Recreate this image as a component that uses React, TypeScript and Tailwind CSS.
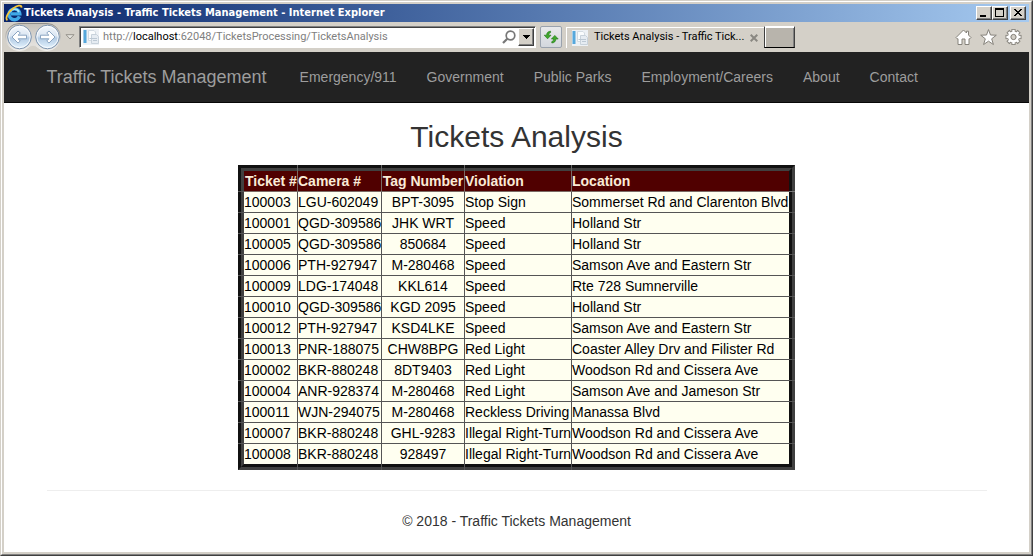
import { ReactNode } from 'react';
import clsx from 'clsx';

const links = ['Emergency/911', 'Government', 'Public Parks', 'Employment/Careers', 'About', 'Contact'];

const headers = ['Ticket #', 'Camera #', 'Tag Number', 'Violation', 'Location'];

const tickets = [
  ['100003', 'LGU-602049', 'BPT-3095', 'Stop Sign', 'Sommerset Rd and Clarenton Blvd'],
  ['100001', 'QGD-309586', 'JHK WRT', 'Speed', 'Holland Str'],
  ['100005', 'QGD-309586', '850684', 'Speed', 'Holland Str'],
  ['100006', 'PTH-927947', 'M-280468', 'Speed', 'Samson Ave and Eastern Str'],
  ['100009', 'LDG-174048', 'KKL614', 'Speed', 'Rte 728 Sumnerville'],
  ['100010', 'QGD-309586', 'KGD 2095', 'Speed', 'Holland Str'],
  ['100012', 'PTH-927947', 'KSD4LKE', 'Speed', 'Samson Ave and Eastern Str'],
  ['100013', 'PNR-188075', 'CHW8BPG', 'Red Light', 'Coaster Alley Drv and Filister Rd'],
  ['100002', 'BKR-880248', '8DT9403', 'Red Light', 'Woodson Rd and Cissera Ave'],
  ['100004', 'ANR-928374', 'M-280468', 'Red Light', 'Samson Ave and Jameson Str'],
  ['100011', 'WJN-294075', 'M-280468', 'Reckless Driving', 'Manassa Blvd'],
  ['100007', 'BKR-880248', 'GHL-9283', 'Illegal Right-Turn', 'Woodson Rd and Cissera Ave'],
  ['100008', 'BKR-880248', '928497', 'Illegal Right-Turn', 'Woodson Rd and Cissera Ave'],
];

function IeLogo() {
  return (
    <svg width="18" height="18" viewBox="0 0 18 18" className="shrink-0" aria-hidden="true">
      <path d="M14.4 12.4 A5.4 5.4 0 1 1 14.8 9.9 H6" fill="none" stroke="#3fa9e8" strokeWidth="3.4" />
      <path d="M5 8 A5 5 0 0 1 14 8" fill="none" stroke="#a6e6fb" strokeWidth="1.8" />
      <path d="M2.4 16.4 C0 14.6 2.6 8.4 8 4.4 C12 1.4 16.4 0.2 16.6 3.6" fill="none" stroke="#f9c836" strokeWidth="1.8" />
    </svg>
  );
}

function PageIcon() {
  return (
    <svg width="16" height="16" viewBox="0 0 16 16" className="shrink-0" aria-hidden="true">
      <rect x="0" y="0" width="16" height="16" fill="#edf1f5" />
      <rect x="0.5" y="1" width="3" height="13" fill="#56a8dc" />
      <path d="M5.5 1.5 H11 L12.5 3 V11.5 H5.5 Z" fill="#fafcfd" stroke="#d3dbe2" />
      <path d="M8.5 5.5 H13.5 L15.5 7.5 V14.5 H8.5 Z" fill="#e6ecf2" stroke="#c8d2db" />
      <path d="M6.5 9.5 H14 M10 11.5 H14" stroke="#bcc8d3" />
    </svg>
  );
}

function TravelButtons() {
  const arrow = 'M-7.5 0 L-1.5 -6 L0.8 -4 L-1.4 -1.8 H7 V1.8 H-1.4 L0.8 4 L-1.5 6 Z';
  return (
    <div className="relative h-[28px] w-[56px] shrink-0">
      <svg width="56" height="28" viewBox="0 0 56 28" aria-hidden="true">
        <defs>
          <linearGradient id="orb" x1="0" y1="0" x2="0" y2="1">
            <stop offset="0" stopColor="#f4f8fc" />
            <stop offset="0.45" stopColor="#dbe6f2" />
            <stop offset="0.55" stopColor="#b3cbe4" />
            <stop offset="1" stopColor="#e6f5ff" />
          </linearGradient>
          <linearGradient id="pod" x1="0" y1="0" x2="0" y2="1">
            <stop offset="0" stopColor="#c4c1bb" />
            <stop offset="1" stopColor="#eceae6" />
          </linearGradient>
          <linearGradient id="rim" x1="0" y1="0" x2="0" y2="1">
            <stop offset="0" stopColor="#8f8d89" />
            <stop offset="1" stopColor="#f2f1ee" />
          </linearGradient>
        </defs>
        <path
          d="M14 0.5 H42 A13.5 13.5 0 0 1 42 27.5 Q36 27.5 33 24.5 Q28 20 23 24.5 Q20 27.5 14 27.5 A13.5 13.5 0 0 1 14 0.5 Z"
          fill="url(#pod)"
          stroke="url(#rim)"
        />
        {[14.5, 42.5].map((x) => (
          <g key={x} transform={`translate(${x} 14)`}>
            <circle r="11.8" fill="url(#orb)" stroke="#7d93ad" />
            <circle r="10.6" fill="none" stroke="#fff" strokeOpacity="0.8" />
            <path d={arrow} transform={x > 28 ? 'scale(-1 1)' : undefined} fill="#fff" stroke="#8ba5c2" />
          </g>
        ))}
      </svg>
      <div className="absolute inset-0 flex">
        <button type="button" aria-label="Back" className="flex-1" />
        <button type="button" aria-label="Forward" className="flex-1" />
      </div>
    </div>
  );
}

function CaptionButton({ label, children }: Readonly<{ label: string; children: ReactNode }>) {
  return (
    <button
      type="button"
      aria-label={label}
      className="h-[14px] w-4 border border-t-white border-r-[#404040] border-b-[#404040] border-l-white bg-[#d4d0c8] shadow-[inset_-1px_-1px_0_#808080]"
    >
      <svg width="14" height="12" viewBox="0 0 14 12" shapeRendering="crispEdges">{children}</svg>
    </button>
  );
}

function TitleBar() {
  return (
    <header className="flex h-[18px] items-center bg-linear-to-r from-[#0a246a] to-[#a6caf0] pr-[3px] pl-px">
      <IeLogo />
      <span className="flex-1 truncate pl-px font-['DejaVu_Sans_Condensed','DejaVu_Sans',sans-serif] text-[11px] font-bold text-white">
        Tickets Analysis - Traffic Tickets Management - Internet Explorer
      </span>
      <CaptionButton label="Minimize">
        <rect x="3" y="8" width="6" height="2" />
      </CaptionButton>
      <CaptionButton label="Maximize">
        <path d="M2 1 H11 V10 H2 Z M3 3 V9 H10 V3 Z" fillRule="evenodd" />
      </CaptionButton>
      <span className="w-0.5" />
      <CaptionButton label="Close">
        <path d="M3 2 h2 v1 h1 v1 h2 v-1 h1 v-1 h2 v1 h-1 v1 h-1 v1 h-1 v1 h1 v1 h1 v1 h1 v1 h-2 v-1 h-1 v-1 h-2 v1 h-1 v1 h-2 v-1 h1 v-1 h1 v-1 h1 v-1 h-1 v-1 h-1 v-1 h-1 Z" />
      </CaptionButton>
    </header>
  );
}

function AddressBar() {
  return (
    <div className="flex h-[22px] max-w-[457px] flex-1 items-center border border-t-[#808080] border-r-white border-b-white border-l-[#808080] bg-white pr-px pl-[3px] shadow-[inset_1px_1px_0_#404040]">
      <PageIcon />
      <div className="relative ml-1 flex h-4 flex-1 items-center">
        <input
          aria-label="Address"
          defaultValue="http://localhost:62048/TicketsProcessing/TicketsAnalysis"
          className="w-full text-transparent caret-black outline-none"
        />
        {/* host name is darker than the rest of the address */}
        <span aria-hidden="true" className="pointer-events-none absolute inset-0 leading-4 whitespace-nowrap text-[#808080]">
          http://<span className="text-black">localhost</span>:62048/TicketsProcessing/TicketsAnalysis
        </span>
      </div>
      <button type="button" aria-label="Search" className="mr-0.5">
        <svg width="14" height="14" viewBox="0 0 14 14" fill="none" stroke="#777">
          <circle cx="8.5" cy="5.5" r="4.3" strokeWidth="1.7" />
          <path d="M5.3 8.7 L1 13" strokeWidth="2.2" />
        </svg>
      </button>
      <button
        type="button"
        aria-label="Show address list"
        className="flex h-[18px] w-4 items-center justify-center border border-t-white border-r-[#404040] border-b-[#404040] border-l-white bg-[#d4d0c8] shadow-[inset_-1px_-1px_0_#808080]"
      >
        <svg width="7" height="4" viewBox="0 0 7 4" shapeRendering="crispEdges">
          <path d="M0 0 H7 V1 H6 V2 H5 V3 H4 V4 H3 V3 H2 V2 H1 V1 H0 Z" />
        </svg>
      </button>
    </div>
  );
}

function Toolbar() {
  return (
    <div className="flex h-[30px] items-center bg-[#d4d0c8] pr-[7px] pl-px text-[11px]">
      <TravelButtons />
      <button type="button" aria-label="Recent pages" className="mx-1">
        <svg width="10" height="6" viewBox="0 0 10 6">
          <path d="M1 0.7 H9 L5 5 Z" fill="#e6e4df" stroke="#96938c" />
        </svg>
      </button>
      <AddressBar />
      <button
        type="button"
        aria-label="Refresh"
        className="ml-1 flex size-[22px] items-center justify-center rounded-xs border border-[#9aa2ad] bg-linear-to-b from-[#e9eaec] to-[#d3d7dd]"
      >
        <svg width="16" height="16" viewBox="0 0 16 16" fill="#3fa82c" stroke="#1d7413" strokeWidth="0.6">
          <path d="M7.6 2.2 C5.2 2.4 3.6 3.6 3.6 6.2 H1.2 L4.6 9.8 L8 6.2 H5.8 C5.8 4.8 6.4 4 7.6 3.6 Z" />
          <path d="M8.8 14 C11.2 13.8 12.8 12.6 12.8 10 H15.2 L11.8 6.4 L8.4 10 H10.6 C10.6 11.4 10 12.2 8.8 12.6 Z" />
        </svg>
      </button>
      <div className="ml-1 flex h-[21px] w-[198px] items-center border-t border-l border-white pl-[5px] text-black">
        <PageIcon />
        <button type="button" className="ml-1 flex-1 pl-0.5 text-left whitespace-nowrap">Tickets Analysis - Traffic Tick...</button>
        <button type="button" aria-label="Close tab" className="mr-1.5 ml-1">
          <svg width="8" height="8" viewBox="0 0 8 8" stroke="#8a8882" strokeWidth="2">
            <path d="M0.7 0.7 L7.3 7.3 M7.3 0.7 L0.7 7.3" />
          </svg>
        </button>
      </div>
      <button
        type="button"
        aria-label="New tab"
        className="h-[22px] w-[31px] border border-t-white border-r-[#404040] border-b-black border-l-[#404040] bg-[#b8b4ac] shadow-[inset_1px_1px_0_#fff,inset_-1px_0_0_#808080]"
      />
      <div className="ml-auto flex gap-2">
        <button type="button" aria-label="Home">
          <svg width="17" height="18" viewBox="0 0 17 18" fill="#fff" stroke="#85827b" strokeLinejoin="round">
            <path d="M8.5 2 L11.5 5 V3.2 H13.5 V7 L16 9.6 L14.8 10.8 H14 V16.5 H10 V11 H7 V16.5 H3 V10.8 H2.2 L1 9.6 Z" />
          </svg>
        </button>
        <button type="button" aria-label="Favorites">
          <svg width="17" height="18" viewBox="0 0 17 18" fill="#fff" stroke="#85827b" strokeLinejoin="round">
            <path d="M8.5 1.6 L10.5 7 L16.3 7.2 L11.7 10.8 L13.4 16.5 L8.5 13.2 L3.6 16.5 L5.3 10.8 L0.7 7.2 L6.5 7 Z" />
          </svg>
        </button>
        <button type="button" aria-label="Tools">
          <svg width="17" height="18" viewBox="0 0 17 18" fill="none">
            <g transform="translate(8.5 9)">
              {[0, 45, 90, 135].map((a) => (
                <path key={a} d="M0 -8 V8" transform={`rotate(${a})`} stroke="#85827b" strokeWidth="4.2" />
              ))}
              <circle r="5.6" stroke="#85827b" />
              {[0, 45, 90, 135].map((a) => (
                <path key={a} d="M0 -7.1 V7.1" transform={`rotate(${a})`} stroke="#fff" strokeWidth="2.4" />
              ))}
              <circle r="4.2" fill="#d4d0c8" stroke="#fff" strokeWidth="2.6" />
              <circle r="2.6" fill="#d4d0c8" stroke="#85827b" />
            </g>
          </svg>
        </button>
      </div>
    </div>
  );
}

function TicketsTable() {
  return (
    <div className="mx-auto w-fit border-3 border-t-[#111] border-r-[#404040] border-b-[#404040] border-l-[#111]">
      <div className="border-3 border-t-[#404040] border-r-[#111] border-b-[#111] border-l-[#404040]">
        <table className="w-[545px] table-fixed border-separate border-spacing-0 bg-[#fffff0] leading-5 whitespace-nowrap text-black">
          <colgroup>
            <col className="w-[54px]" />
            <col className="w-[84px]" />
            <col className="w-[83px]" />
            <col className="w-[107px]" />
            <col />
          </colgroup>
          <thead className="bg-[#500000] text-left text-[#faebd7]">
            <tr>
              {headers.map((h, i) => (
                <th
                  key={h}
                  className={clsx(
                    'relative border-b border-[#7a6a64] p-0 font-bold',
                    i === 0 && 'pl-px',
                    i === 2 && 'text-center',
                    i < 4 && 'border-r after:absolute after:-top-1.5 after:-right-px after:h-1.5 after:w-px after:bg-[#666]',
                    i === 0 && 'before:absolute before:-bottom-px before:-left-1.5 before:h-px before:w-1.5 before:bg-[#555]',
                    i === 4 && 'before:absolute before:-right-1.5 before:-bottom-px before:h-px before:w-1.5 before:bg-[#777]',
                  )}
                >
                  {h}
                </th>
              ))}
            </tr>
          </thead>
          <tbody>
            {tickets.map((row, r) => (
              <tr key={row[0]}>
                {row.map((cell, i) => (
                  <td
                    key={i}
                    className={clsx(
                      'relative border-[#555] p-0',
                      i === 2 && 'text-center',
                      i < 4 && 'border-r',
                      r < 12 && 'border-b',
                      i === 0 && r < 12 && 'before:absolute before:-bottom-px before:-left-1.5 before:h-px before:w-1.5 before:bg-[#555]',
                      i === 4 && r < 12 && 'before:absolute before:-right-1.5 before:-bottom-px before:h-px before:w-1.5 before:bg-[#555]',
                      i < 4 && r === 12 && 'after:absolute after:-right-px after:-bottom-1.5 after:h-1.5 after:w-px after:bg-[#555]',
                    )}
                  >
                    {cell}
                  </td>
                ))}
              </tr>
            ))}
          </tbody>
        </table>
      </div>
    </div>
  );
}

export default function App() {
  return (
    <div className="flex min-h-screen border border-t-[#d4d0c8] border-r-[#404040] border-b-[#404040] border-l-[#d4d0c8] bg-[#d4d0c8] font-[Roboto,sans-serif]">
      <div className="flex min-w-0 flex-1 flex-col border border-t-white border-r-[#808080] border-b-[#808080] border-l-white p-0.5">
        <TitleBar />
        <Toolbar />
        <div className="flex-1 bg-white font-['Liberation_Sans',Arial,sans-serif] text-sm text-[#333]">
          <nav className="border-b border-[#080808] bg-[#222] text-[#9d9d9d]">
            <div className="mx-auto flex h-[50px] max-w-[970px] items-center">
              <a href="#" className="pr-[18px] pl-[15px] text-lg">Traffic Tickets Management</a>
              {links.map((link) => (
                <a key={link} href="#" className="px-[15px]">{link}</a>
              ))}
            </div>
          </nav>
          <main className="mx-auto max-w-[940px]">
            <h2 className="mt-[18px] mb-3 text-center text-3xl leading-8">Tickets Analysis</h2>
            <TicketsTable />
            <hr className="my-5 border-[#eee]" />
            <footer className="text-center leading-5">
              <p>&copy; 2018 - Traffic Tickets Management</p>
            </footer>
          </main>
        </div>
      </div>
    </div>
  );
}
